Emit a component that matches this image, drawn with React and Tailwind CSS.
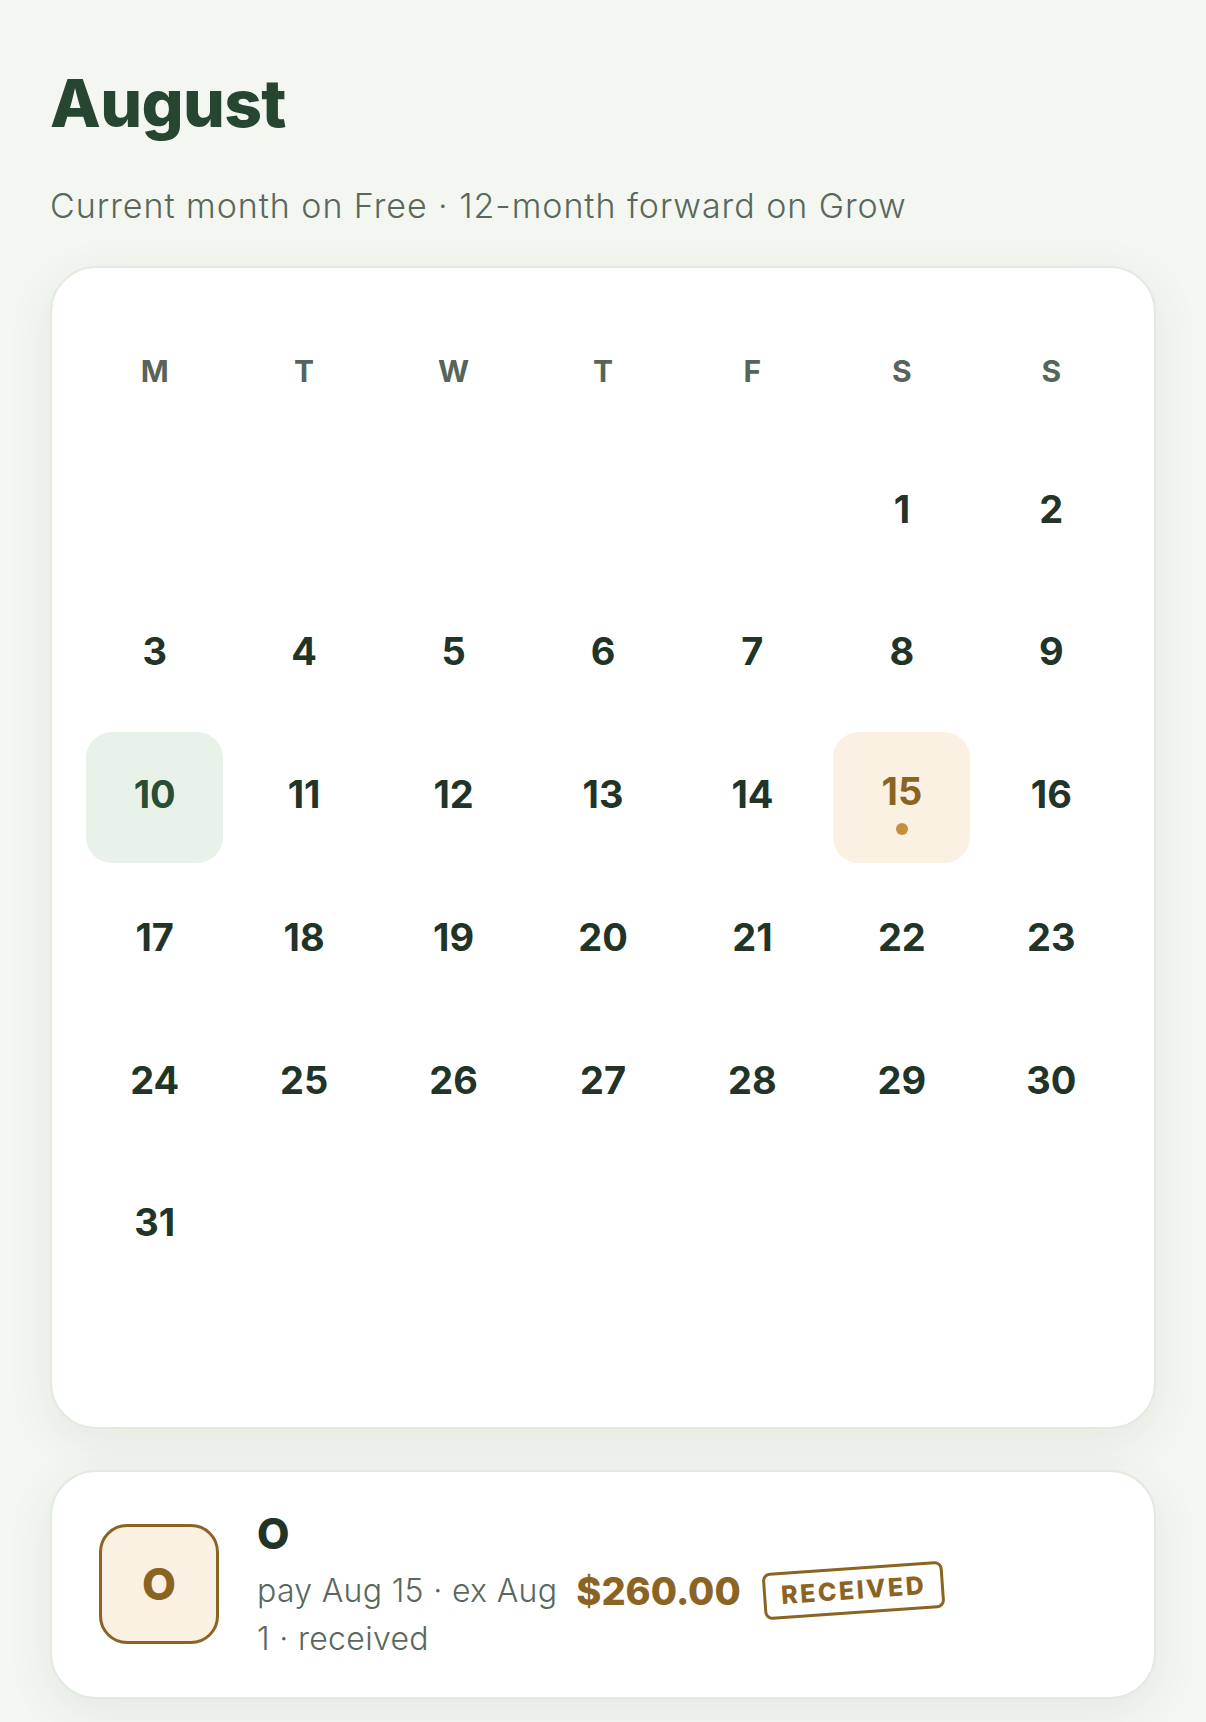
const WEEKDAYS = ["M", "T", "W", "T", "F", "S", "S"]

// August starts on a Saturday (Monday-first grid)
const cells = [...Array(5).fill(null), ...Array.from({ length: 31 }, (_, i) => i + 1)]

const DayCell = ({ day }) => {
  if (!day) return <div />

  if (day === 10) {
    return (
      <div className="flex items-center justify-center">
        <div className="flex h-[131px] w-[137px] items-center justify-center rounded-[26px] bg-[#e9f2e9] pb-[6px]">
          <span className="text-[38px] font-bold leading-none text-[#2a4d35]">{day}</span>
        </div>
      </div>
    )
  }

  if (day === 15) {
    return (
      <div className="flex items-center justify-center">
        <div className="flex h-[131px] w-[137px] flex-col items-center justify-center gap-[13px] rounded-[26px] bg-[#faf1e2] pt-[12px]">
          <span className="text-[38px] font-bold leading-none text-[#8b6424]">{day}</span>
          <span className="h-[12px] w-[12px] rounded-full bg-[#c4903a]" />
        </div>
      </div>
    )
  }

  return (
    <div className="flex items-center justify-center pb-[6px]">
      <span className="text-[38px] font-bold leading-none text-[#223327]">{day}</span>
    </div>
  )
}

export default function App() {
  return (
    <div className="min-h-screen bg-[#f4f7f1] px-[50px] pt-[70px] pb-[40px] font-['Inter','Noto_Sans',sans-serif]">
      <h1 className="text-[66px] font-extrabold leading-none tracking-[-0.01em] text-[#264632]">August</h1>
      <p className="mt-[45px] text-[34px] font-light leading-[1.45] tracking-[0.028em] text-[#59675c]">
        Current month on Free · 12-month forward on Grow
      </p>

      {/* Calendar card */}
      <div className="mt-[36px] rounded-[46px] border-2 border-[#e2eae1] bg-white px-[28px] pt-[88px] pb-[136px] shadow-[0_12px_48px_rgba(38,70,50,0.08)]">
        <div className="grid grid-cols-7">
          {WEEKDAYS.map((d, i) => (
            <div key={i} className="text-center text-[30px] font-bold leading-none text-[#56645a]">
              {d}
            </div>
          ))}
        </div>
        <div className="mt-[60px] grid grid-cols-7 auto-rows-[131px] gap-y-[11.7px]">
          {cells.map((day, i) => (
            <DayCell key={i} day={day} />
          ))}
        </div>
      </div>

      {/* Payment row */}
      <div className="mt-[41px] flex h-[229px] items-center rounded-[46px] border-2 border-[#e2eae1] bg-white pl-[47px] shadow-[0_12px_48px_rgba(38,70,50,0.08)]">
        <div className="flex h-[120px] w-[120px] shrink-0 items-center justify-center rounded-[28px] border-[3px] border-[#8b6424] bg-[#faf1e2] text-[44px] font-extrabold text-[#8b6424]">
          O
        </div>
        <div className="ml-[38px] pt-[4px]">
          <div className="mb-[9px] text-[42px] font-extrabold leading-[48px] text-[#223327]">O</div>
          <div className="flex items-center">
            <span className="text-[32px] font-light leading-[48px] tracking-[0.01em] text-[#59675c]">pay Aug 15 · ex Aug</span>
            <span className="ml-[19px] text-[38px] font-extrabold leading-none text-[#8b6424]">$260.00</span>
            <span className="ml-[22px] -rotate-[4deg] rounded-[8px] border-[3px] border-[#8b6424] px-[15px] py-[8px] text-[25px] font-extrabold leading-none tracking-[0.1em] text-[#8b6424]">
              RECEIVED
            </span>
          </div>
          <div className="text-[32px] font-light leading-[48px] tracking-[0.01em] text-[#59675c]">1 · received</div>
        </div>
      </div>
    </div>
  )
}
